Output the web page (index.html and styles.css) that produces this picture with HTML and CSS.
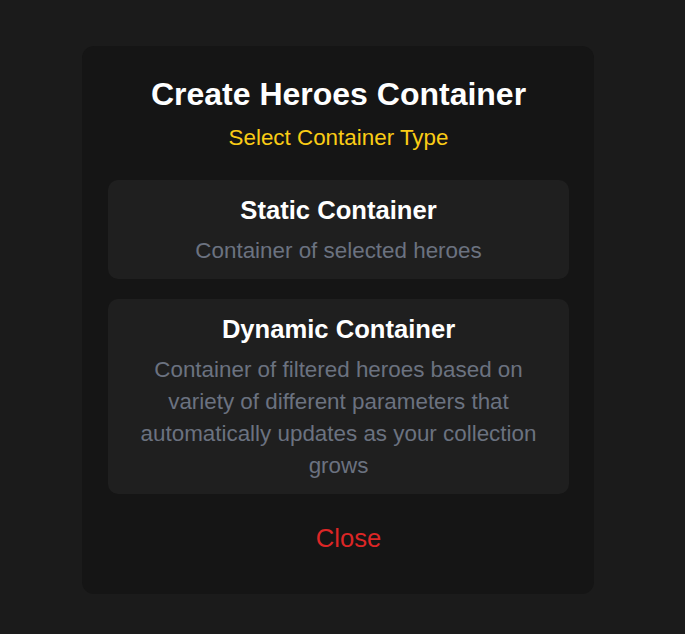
FILE: index.html
```html
<!DOCTYPE html>
<html>
<head>
<meta charset="utf-8">
<link rel="stylesheet" href="styles.css">
</head>
<body>
<div class="page">
  <div class="modal">
    <h1 class="title">Create Heroes Container</h1>
    <p class="subtitle">Select Container Type</p>
    <div class="options">
      <div class="card">
        <h2 class="card-title">Static Container</h2>
        <p class="card-desc">Container of selected heroes</p>
      </div>
      <div class="card">
        <h2 class="card-title">Dynamic Container</h2>
        <p class="card-desc">Container of filtered heroes based on variety of different parameters that automatically updates as your collection grows</p>
      </div>
    </div>
    <button class="close">Close</button>
  </div>
</div>
</body>
</html>
```

FILE: styles.css
```css
html, body {
  margin: 0;
  padding: 0;
  background: #1b1b1b;
  font-family: "Liberation Sans", Arial, sans-serif;
}
.page {
  padding: 46px 0 0 82px;
  min-height: 588px;
}
.modal {
  width: 512px;
  box-sizing: border-box;
  background: #151515;
  border-radius: 12px;
  padding: 30px 25px 40px 26px;
  display: flex;
  flex-direction: column;
  align-items: center;
  text-align: center;
}
.title {
  margin: 0;
  font-size: 32px;
  line-height: 36px;
  font-weight: 700;
  color: #ffffff;
}
.subtitle {
  margin: 12px 0 0;
  font-size: 22.4px;
  line-height: 28px;
  color: #facc15;
}
.options {
  margin-top: 28px;
  width: 100%;
  display: flex;
  flex-direction: column;
  gap: 20px;
}
.card {
  background: #1f1f1f;
  border-radius: 10px;
  padding: 14px 32px 12px;
  display: flex;
  flex-direction: column;
  gap: 9px;
}
.card-title {
  margin: 0;
  font-size: 25.6px;
  line-height: 32px;
  font-weight: 700;
  color: #ffffff;
}
.card-desc {
  margin: 0;
  font-size: 22.4px;
  line-height: 32px;
  color: #6b7280;
}
.close {
  margin-top: 28px;
  background: none;
  border: none;
  padding: 0 0 0 20px;
  font-family: inherit;
  font-size: 25.6px;
  line-height: 32px;
  color: #dc2626;
  cursor: pointer;
}
```
